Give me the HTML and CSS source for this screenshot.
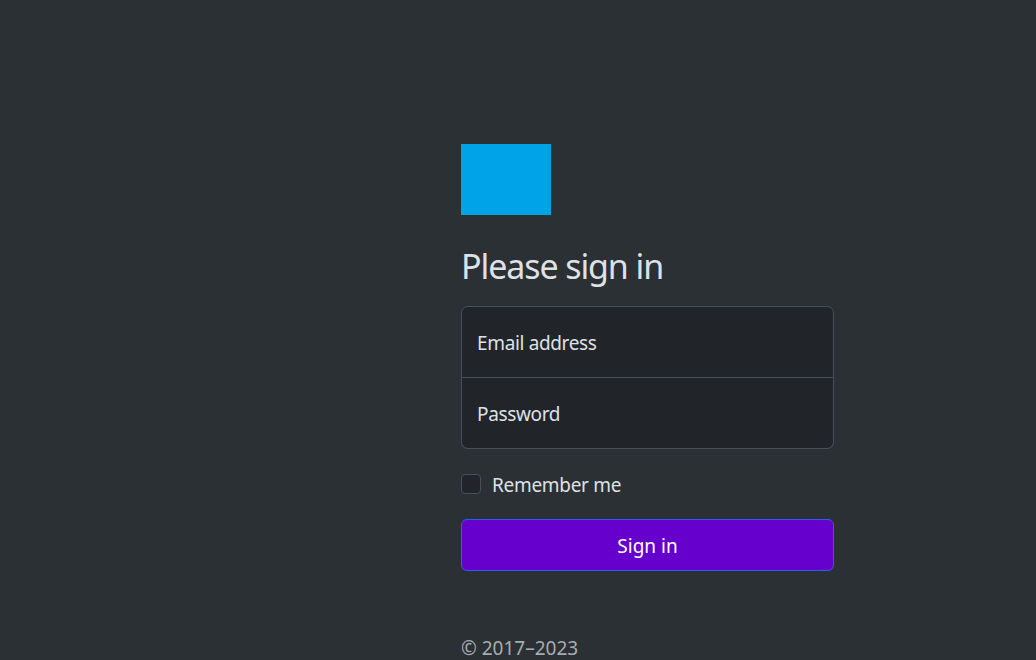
FILE: index.html
```html
<!DOCTYPE html>
<html lang="en">
<head>
<meta charset="utf-8">
<title>Signin</title>
<link rel="stylesheet" href="styles.css">
</head>
<body>
<main class="signin">
  <form class="form">
    <div class="logo"></div>
    <h1 class="title">Please sign in</h1>
    <div class="fields">
      <div class="field field-top"><span class="label">Email address</span></div>
      <div class="field field-bottom"><span class="label">Password</span></div>
    </div>
    <label class="check">
      <span class="box"></span>
      <span class="check-text">Remember me</span>
    </label>
    <button class="btn" type="button">Sign in</button>
    <p class="copy">© 2017–2023</p>
  </form>
</main>
</body>
</html>
```
FILE: styles.css
```css
html, body {
  margin: 0;
  padding: 0;
  height: 100%;
  overflow: hidden;
}
body {
  background: #2b3035;
  color: #dee2e6;
  font-family: "Noto Sans", "Open Sans", sans-serif;
  font-size: 20px;
  line-height: 1.5;
}
.signin {
  padding: 144px 0 0 461px;
}
.form {
  width: 373px;
  display: flex;
  flex-direction: column;
}
.logo {
  width: 90px;
  height: 71px;
  background: #00a3e8;
  margin-bottom: 30px;
}
.title {
  margin: 0 0 19px;
  padding-top: 1px;
  font-size: 34px;
  font-weight: 400;
  line-height: 41px;
  letter-spacing: -1.1px;
  color: #dee2e6;
}
.fields {
  display: flex;
  flex-direction: column;
}
.field {
  height: 71px;
  background: #212529;
  border: 1px solid #495057;
  box-sizing: border-box;
  display: flex;
  align-items: center;
  padding: 2px 15px 0;
}
.field-top {
  border-radius: 7px 7px 0 0;
  height: 72px;
}
.field-bottom {
  border-top: none;
  border-radius: 0 0 7px 7px;
}
.label {
  font-size: 19px;
  letter-spacing: -0.35px;
  color: #dee2e6;
}
.check {
  display: flex;
  align-items: center;
  gap: 11px;
  margin: 20px 0;
  height: 30px;
}
.box {
  width: 18px;
  height: 18px;
  border: 1px solid #495057;
  background: #212529;
  border-radius: 4px;
}
.check-text {
  font-size: 19px;
  letter-spacing: -0.3px;
  padding-top: 2px;
}
.btn {
  height: 52px;
  background: #6600cc;
  border: 1px solid #2a5ef0;
  border-radius: 6px;
  color: #fff;
  font-family: inherit;
  font-size: 19px;
  padding: 2px 0 0;
}
.copy {
  margin: 62px 0 0;
  color: #a7acb1;
  font-size: 19px;
  line-height: 30px;
}
```
